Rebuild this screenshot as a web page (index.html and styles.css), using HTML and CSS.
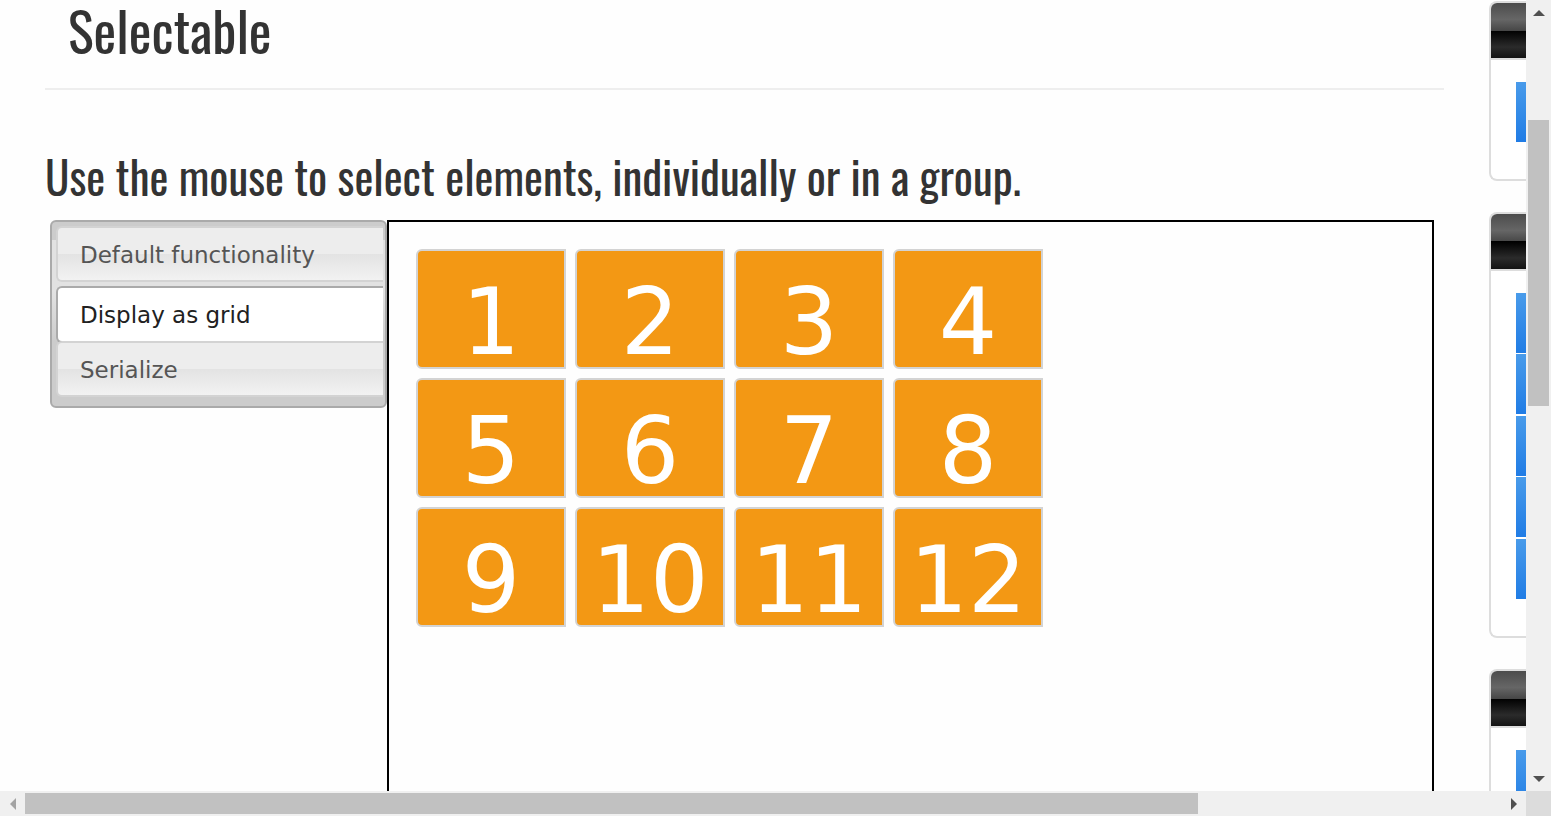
FILE: index.html
```html
<!DOCTYPE html>
<html lang="en">
<head>
<meta charset="utf-8">
<title>Selectable</title>
<link rel="stylesheet" href="styles.css">
</head>
<body>
<div class="shell">
  <div class="viewport">
    <main class="content">
      <h1 class="title">Selectable</h1>
      <h2 class="intro">Use the mouse to select elements, individually or in a group.</h2>
      <div class="widget">
        <nav class="tabs" aria-label="Examples">
          <a class="tab" href="#default">Default functionality</a>
          <a class="tab tab-active" href="#grid">Display as grid</a>
          <a class="tab tab-joined" href="#serialize">Serialize</a>
        </nav>
        <section class="panel" id="grid">
          <ol class="tiles">
            <li class="tile">1</li><li class="tile">2</li><li class="tile">3</li><li class="tile">4</li>
            <li class="tile">5</li><li class="tile">6</li><li class="tile">7</li><li class="tile">8</li>
            <li class="tile">9</li><li class="tile">10</li><li class="tile">11</li><li class="tile">12</li>
          </ol>
        </section>
      </div>
    </main>
    <aside class="sidebar">
      <section class="card"><div class="card-head"></div><div class="card-body"><div class="bar"></div></div></section>
      <section class="card"><div class="card-head"></div><div class="card-body"><div class="bar"></div><div class="bar"></div><div class="bar"></div><div class="bar"></div><div class="bar"></div></div></section>
      <section class="card"><div class="card-head"></div><div class="card-body"><div class="bar"></div><div class="bar"></div></div></section>
    </aside>
  </div>
  <div class="scroll scroll-y">
    <button class="arrow" type="button" aria-label="Scroll up"><svg width="12" height="6" viewBox="0 0 12 6"><path d="M0 6L6 0L12 6Z"/></svg></button>
    <div class="track track-y"><div class="thumb"></div></div>
    <button class="arrow" type="button" aria-label="Scroll down"><svg width="12" height="6" viewBox="0 0 12 6"><path d="M0 0L6 6L12 0Z"/></svg></button>
  </div>
  <div class="scroll scroll-x">
    <button class="arrow arrow-off" type="button" aria-label="Scroll left"><svg width="6" height="12" viewBox="0 0 6 12"><path d="M6 0L0 6L6 12Z"/></svg></button>
    <div class="track track-x"><div class="thumb"></div></div>
    <button class="arrow" type="button" aria-label="Scroll right"><svg width="6" height="12" viewBox="0 0 6 12"><path d="M0 0L6 6L0 12Z"/></svg></button>
  </div>
  <div class="corner"></div>
</div>
</body>
</html>
```

FILE: styles.css
```css
* { box-sizing: border-box; }
body {
  margin: 0;
  background: #fefefe;
  color: #333;
  font-family: Verdana, "DejaVu Sans", sans-serif;
}
.shell {
  display: grid;
  grid-template-columns: minmax(0, 1fr) 25px;
  grid-template-rows: minmax(0, 1fr) 25px;
  height: 100vh;
  overflow: hidden;
}
.viewport {
  display: flex;
  gap: 45px;
  padding-left: 45px;
  overflow: hidden;
}
.content {
  flex: 1;
  display: flex;
  flex-direction: column;
  min-width: 0;
}
.title, .intro {
  margin: 0;
  font-family: Oswald, "Liberation Sans Narrow", "Liberation Sans", sans-serif;
  font-weight: 400;
  white-space: nowrap;
}
.title {
  padding: 0 23px 28px;
  border-bottom: 2px solid #eee;
  font-size: 54px;
  line-height: 60px;
}
.intro {
  padding-top: 52px;
  font-size: 45px;
  line-height: 68px;
}
.widget {
  flex: 1;
  display: flex;
  align-items: flex-start;
  padding: 10px 10px 0 5px;
}
.tabs {
  flex: none;
  display: flex;
  flex-direction: column;
  width: 337px;
  padding: 4px 2px 9px 4px;
  border: 2px solid #aaa;
  border-radius: 6px;
  background: linear-gradient(#ccc 0 18px, #e2e2e2 18px, #e2e2e2 70px, #ccc 120px);
}
.tab {
  height: 56px;
  padding: 0 22px;
  border: 2px solid #d3d3d3;
  border-right: 0;
  border-radius: 6px 0 0 6px;
  background: linear-gradient(#ededed 50%, #e3e3e3 50%, #f2f2f2);
  color: #555;
  font-size: 23px;
  line-height: 54px;
  text-decoration: none;
  white-space: nowrap;
}
.tab-active {
  margin-top: 4px;
  height: 57px;
  border-color: #aaa;
  background: #fff;
  color: #212121;
}
.tab-joined { margin-top: -2px; }
.panel {
  flex: 1;
  align-self: stretch;
  padding: 27px;
  border: 2px solid #000;
  border-bottom: 0;
}
.tiles {
  display: grid;
  grid-template-columns: repeat(4, 150px);
  gap: 9px;
  margin: 0;
  padding: 0;
  list-style: none;
}
.tile {
  height: 120px;
  padding-top: 18px;
  border: 2px solid #d3d3d3;
  border-radius: 6px 0 0 6px;
  background: #f39814;
  color: #fff;
  font-size: 92px;
  line-height: 108px;
  text-align: center;
}
.sidebar {
  flex: none;
  display: flex;
  flex-direction: column;
  gap: 31px;
  width: 37px;
  padding-top: 1px;
}
.card {
  flex: none;
  border: 2px solid #ddd;
  border-right: 0;
  border-radius: 8px 0 0 8px;
  background: #fff;
  overflow: hidden;
}
.card-head {
  height: 57px;
  border-bottom: 2px solid #ddd;
  background: linear-gradient(#4c4c4c, #666 30%, #474747 50%, #000 50%, #2b2b2b 80%, #131313);
}
.card-body {
  display: grid;
  gap: 1px;
  padding: 22px 0 37px 25px;
}
.bar {
  height: 60px;
  background: linear-gradient(#499bea, #207ce5);
}
.bar:nth-child(even) { margin-bottom: 1px; }
.scroll {
  display: flex;
  background: #f0f0f0;
}
.scroll-y { flex-direction: column; }
.track { flex: 1; display: flex; }
.track-y { flex-direction: column; padding: 95px 2px 0; }
.track-x { padding: 2px 0; }
.thumb { background: #c1c1c1; }
.track-y .thumb { height: 286px; }
.track-x .thumb { width: 79.5%; }
.arrow {
  display: flex;
  align-items: center;
  justify-content: center;
  width: 25px;
  height: 25px;
  padding: 0;
  border: 0;
  background: none;
  fill: #505050;
}
.arrow-off { fill: #a3a3a3; }
.corner { background: #dcdcdc; }
```
